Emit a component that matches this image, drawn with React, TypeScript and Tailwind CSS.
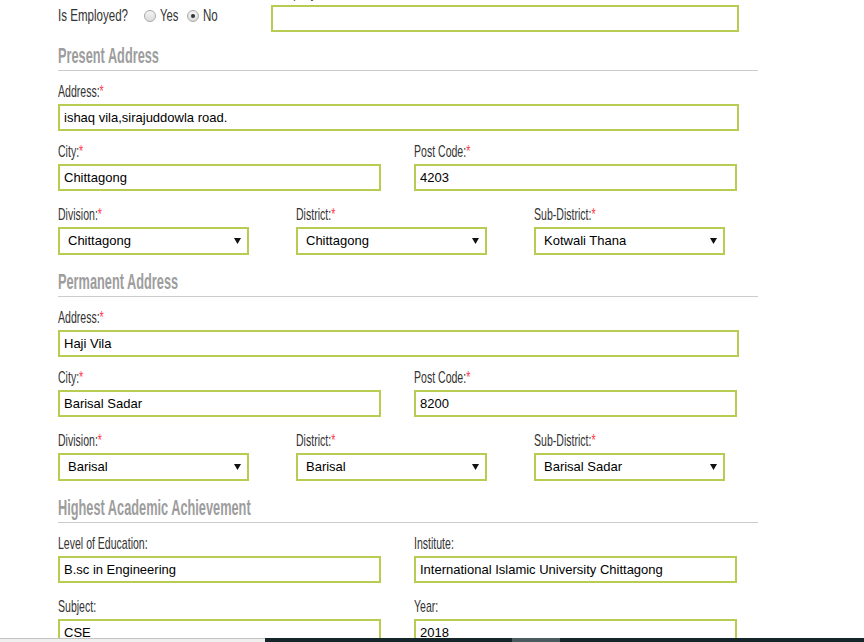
import type { ReactNode } from "react";

const labelFont = { fontFamily: '"Liberation Sans", Arial, sans-serif' };
const inputFont = { fontFamily: '"Liberation Sans", Arial, sans-serif' };

function Label({ text, req = false }: { text: string; req?: boolean }) {
    return (
        <div className="h-[16px] leading-[16px] mb-[4px] whitespace-nowrap" style={labelFont}>
            <span className="inline-block origin-left scale-x-[0.62] text-[17px] text-[#333]">
                {text}
                {req && <span className="text-[#ff3b4a]">*</span>}
            </span>
        </div>
    );
}

function TextField({ label, value, req, w }: { label: string; value: string; req?: boolean; w: string }) {
    return (
        <div className={w}>
            <Label text={label} req={req} />
            <input
                readOnly
                defaultValue={value}
                className="block w-full h-[27px] border-2 border-[#b8cc52] px-[4px] text-[13px] text-black outline-none bg-white"
                style={inputFont}
            />
        </div>
    );
}

function SelectField({ label, value }: { label: string; value: string }) {
    return (
        <div className="w-[191px]">
            <Label text={label} req />
            <div
                className="flex items-center justify-between h-[28px] border-2 border-[#b8cc52] pl-[8px] pr-[6px] text-[13px] text-black bg-white"
                style={inputFont}
            >
                <span>{value}</span>
                <svg width="7" height="6" viewBox="0 0 7 6">
                    <polygon points="0,0 7,0 3.5,6" fill="#111" />
                </svg>
            </div>
        </div>
    );
}

function Heading({ children, mt }: { children: ReactNode; mt: string }) {
    return (
        <div className={`${mt} w-[700px] h-[29px] border-b border-[#cccccc] leading-[28px] whitespace-nowrap overflow-visible`} style={labelFont}>
            <span className="block origin-left scale-x-[0.58] text-[22px] font-bold text-[#9d9d9d]">{children}</span>
        </div>
    );
}

function Radio({ checked }: { checked?: boolean }) {
    return (
        <span className="inline-flex shrink-0 items-center justify-center w-[12px] h-[12px] rounded-full border border-[#a8a8a8] bg-gradient-to-b from-[#f4f4f4] to-[#dcdcdc]">
            {checked && <span className="w-[4px] h-[4px] rounded-full bg-[#333]" />}
        </span>
    );
}

function AddressBlock({ a }: { a: { address: string; city: string; post: string; division: string; district: string; sub: string } }) {
    return (
        <>
            <div className="mt-[13px]">
                <TextField label="Address:" value={a.address} req w="w-[681px]" />
            </div>
            <div className="mt-[13px] grid grid-cols-[323px_323px] gap-x-[33px]">
                <TextField label="City:" value={a.city} req w="w-full" />
                <TextField label="Post Code:" value={a.post} req w="w-full" />
            </div>
            <div className="mt-[16px] grid grid-cols-[191px_191px_191px] gap-x-[47px]">
                <SelectField label="Division:" value={a.division} />
                <SelectField label="District:" value={a.district} />
                <SelectField label="Sub-District:" value={a.sub} />
            </div>
        </>
    );
}

export default function App() {
    return (
        <div className="h-[642px] w-[864px] flex flex-col overflow-hidden bg-white">
            <div className="flex-1 min-h-0 overflow-hidden">
                <div className="pl-[58px] mt-[-15px]">
                    {/* employment row */}
                    <div className="flex">
                        <div className="w-[213px] mt-[17px] h-[27px] flex items-center text-[17px] text-[#333] whitespace-nowrap" style={labelFont}>
                            <span className="w-[86px] shrink-0">
                                <span className="inline-block origin-left scale-x-[0.68]">Is Employed?</span>
                            </span>
                            <Radio />
                            <span className="w-[27px] ml-[4px] shrink-0">
                                <span className="inline-block origin-left scale-x-[0.66]">Yes</span>
                            </span>
                            <Radio checked />
                            <span className="ml-[4px]">
                                <span className="inline-block origin-left scale-x-[0.68]">No</span>
                            </span>
                        </div>
                        <TextField label="Company:" value="" w="w-[468px]" />
                    </div>

                    <Heading mt="mt-[10px]">Present Address</Heading>
                    <AddressBlock
                        a={{
                            address: "ishaq vila,sirajuddowla road.",
                            city: "Chittagong",
                            post: "4203",
                            division: "Chittagong",
                            district: "Chittagong",
                            sub: "Kotwali Thana",
                        }}
                    />

                    <Heading mt="mt-[13px]">Permanent Address</Heading>
                    <AddressBlock
                        a={{
                            address: "Haji Vila",
                            city: "Barisal Sadar",
                            post: "8200",
                            division: "Barisal",
                            district: "Barisal",
                            sub: "Barisal Sadar",
                        }}
                    />

                    <Heading mt="mt-[13px]">Highest Academic Achievement</Heading>
                    <div className="mt-[13px] grid grid-cols-[323px_323px] gap-x-[33px]">
                        <TextField label="Level of Education:" value="B.sc in Engineering" w="w-full" />
                        <TextField label="Institute:" value="International Islamic University Chittagong" w="w-full" />
                    </div>
                    <div className="mt-[16px] grid grid-cols-[323px_323px] gap-x-[33px]">
                        <TextField label="Subject:" value="CSE" w="w-full" />
                        <TextField label="Year:" value="2018" w="w-full" />
                    </div>
                </div>
            </div>
            {/* bottom strip */}
            <div className="h-[4px] flex">
                <div className="w-[265px] bg-[#efefef] border-t border-[#c4c4c4]" />
                <div className="w-[247px] bg-[#15262b]" />
                <div className="w-[48px] bg-[#4a5b5f]" />
                <div className="flex-1 bg-[#15262b]" />
            </div>
        </div>
    );
}
